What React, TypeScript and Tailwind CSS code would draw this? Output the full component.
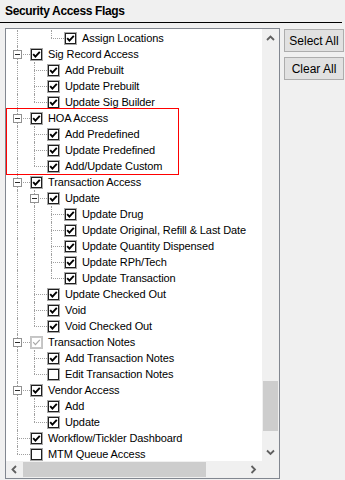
import React from "react";

type Row = {
  label: string;
  level: number;
  guides: boolean[];
  last: boolean;
  children?: boolean;
  state: "on" | "off" | "gray";
};

const rows: Row[] = [
  { label: "Assign Locations", level: 2, guides: [true, false], last: true, state: "on" },
  { label: "Sig Record Access", level: 0, guides: [], last: false, children: true, state: "on" },
  { label: "Add Prebuilt", level: 1, guides: [true], last: false, state: "on" },
  { label: "Update Prebuilt", level: 1, guides: [true], last: false, state: "on" },
  { label: "Update Sig Builder", level: 1, guides: [true], last: true, state: "on" },
  { label: "HOA Access", level: 0, guides: [], last: false, children: true, state: "on" },
  { label: "Add Predefined", level: 1, guides: [true], last: false, state: "on" },
  { label: "Update Predefined", level: 1, guides: [true], last: false, state: "on" },
  { label: "Add/Update Custom", level: 1, guides: [true], last: true, state: "on" },
  { label: "Transaction Access", level: 0, guides: [], last: false, children: true, state: "on" },
  { label: "Update", level: 1, guides: [true], last: false, children: true, state: "on" },
  { label: "Update Drug", level: 2, guides: [true, true], last: false, state: "on" },
  { label: "Update Original, Refill & Last Date", level: 2, guides: [true, true], last: false, state: "on" },
  { label: "Update Quantity Dispensed", level: 2, guides: [true, true], last: false, state: "on" },
  { label: "Update RPh/Tech", level: 2, guides: [true, true], last: false, state: "on" },
  { label: "Update Transaction", level: 2, guides: [true, true], last: true, state: "on" },
  { label: "Update Checked Out", level: 1, guides: [true], last: false, state: "on" },
  { label: "Void", level: 1, guides: [true], last: false, state: "on" },
  { label: "Void Checked Out", level: 1, guides: [true], last: true, state: "on" },
  { label: "Transaction Notes", level: 0, guides: [], last: false, children: true, state: "gray" },
  { label: "Add Transaction Notes", level: 1, guides: [true], last: false, state: "on" },
  { label: "Edit Transaction Notes", level: 1, guides: [true], last: true, state: "off" },
  { label: "Vendor Access", level: 0, guides: [], last: false, children: true, state: "on" },
  { label: "Add", level: 1, guides: [true], last: false, state: "on" },
  { label: "Update", level: 1, guides: [true], last: true, state: "on" },
  { label: "Workflow/Tickler Dashboard", level: 0, guides: [], last: false, state: "on" },
  { label: "MTM Queue Access", level: 0, guides: [], last: true, state: "off" },
];

function CheckBox({ state }: { state: Row["state"] }) {
  const gray = state === "gray";
  return (
    <div
      className={
        "w-[13px] h-[13px] shrink-0 border flex " +
        (gray ? "border-[#c4c4c4]" : "border-[#a8a8a8]")
      }
    >
      <div
        className={
          "flex-1 border bg-white flex items-center justify-center " +
          (gray ? "border-[#c8c8c8]" : "border-[#1e1e1e]")
        }
      >
        {state !== "off" && (
          <svg width="9" height="9" viewBox="0 0 9 9">
            <path
              d="M1.2 4.2 L3.4 6.6 L7.8 1.8"
              fill="none"
              stroke={gray ? "#a8a8a8" : "#000"}
              strokeWidth={gray ? 1.2 : 1.9}
            />
          </svg>
        )}
      </div>
    </div>
  );
}

function TreeRow({ row }: { row: Row }) {
  return (
    <div className="flex items-center h-4 pl-[3px] whitespace-nowrap">
      {row.guides.map((g, i) => (
        <div key={i} className="w-[17px] h-full shrink-0">
          {g && <div className="ml-[8px] h-full border-l border-dotted border-[#a0a0a0]" />}
        </div>
      ))}
      <div className="relative w-[21px] h-full shrink-0 flex flex-col">
        <div className="ml-[8px] h-2 border-l border-dotted border-[#a0a0a0]" />
        <div
          className={
            "ml-[8px] h-2 border-t border-dotted border-[#a0a0a0] " +
            (row.last ? "" : "border-l")
          }
        />
        {row.children && (
          <div className="absolute left-[4px] top-[4px] w-[9px] h-[9px] bg-white border border-[#919191] flex items-center justify-center">
            <div className="w-[5px] h-px bg-[#2b2b2b]" />
          </div>
        )}
      </div>
      <CheckBox state={row.state} />
      <span className="ml-[5px] text-[11px] tracking-[-0.1px] leading-4 text-black">{row.label}</span>
    </div>
  );
}

function Chevron({ dir }: { dir: "up" | "down" | "left" | "right" }) {
  const d =
    dir === "up"
      ? "M1 5 L4.5 1.5 L8 5"
      : dir === "down"
      ? "M1 1.5 L4.5 5 L8 1.5"
      : dir === "left"
      ? "M5 1 L1.5 4.5 L5 8"
      : "M1.5 1 L5 4.5 L1.5 8";
  const w = dir === "up" || dir === "down" ? 9 : 7;
  const h = dir === "up" || dir === "down" ? 7 : 9;
  return (
    <svg width={w} height={h} viewBox={`0 0 ${w} ${h}`}>
      <path d={d} fill="none" stroke="#606060" strokeWidth="1.8" />
    </svg>
  );
}

export default function App() {
  return (
    <div
      className="relative w-[345px] h-[480px] bg-[#f0f0f0] overflow-hidden text-black"
      style={{ fontFamily: '"Liberation Sans", Arial, sans-serif' }}
    >
      <div className="h-[22px] pl-[5px] pt-[4px] text-[12px] tracking-[-0.35px] font-bold leading-[15px]">
        Security Access Flags
      </div>
      <div className="w-[342px] h-px bg-black" />
      <div className="flex pt-[5px]">
        <div className="ml-[5px] w-[275px] h-[451px] border border-[#828790] flex flex-col">
          <div className="flex flex-1 min-h-0">
            <div className="flex-1 bg-white pt-px overflow-hidden">
              {rows.map((r, i) => (
                <TreeRow key={i} row={r} />
              ))}
            </div>
            <div className="w-[17px] flex flex-col bg-[#f0f0f0]">
              <div className="h-[17px] flex items-center justify-center pt-[2px]">
                <Chevron dir="up" />
              </div>
              <div className="flex-1" />
              <div className="h-[50px] mx-px bg-[#cdcdcd]" />
              <div className="h-[13px]" />
              <div className="h-[17px] flex items-center justify-center">
                <Chevron dir="down" />
              </div>
            </div>
          </div>
          <div className="h-[17px] flex bg-[#f0f0f0]">
            <div className="w-[17px] flex items-center justify-center">
              <Chevron dir="left" />
            </div>
            <div className="w-[183px] my-px bg-[#cdcdcd]" />
            <div className="flex-1" />
            <div className="w-[17px] flex items-center justify-center">
              <Chevron dir="right" />
            </div>
            <div className="w-[17px]" />
          </div>
        </div>
        <div className="ml-[4px] mt-px w-[60px] flex flex-col gap-[5px]">
          <button className="h-[23px] bg-[#e1e1e1] border border-[#adadad] text-[12px] leading-none">
            Select All
          </button>
          <button className="h-[23px] bg-[#e1e1e1] border border-[#adadad] text-[12px] leading-none">
            Clear All
          </button>
        </div>
      </div>
      <div className="absolute left-[6px] top-[108px] w-[173px] h-[67px] border border-[#ff0000]" />
    </div>
  );
}
